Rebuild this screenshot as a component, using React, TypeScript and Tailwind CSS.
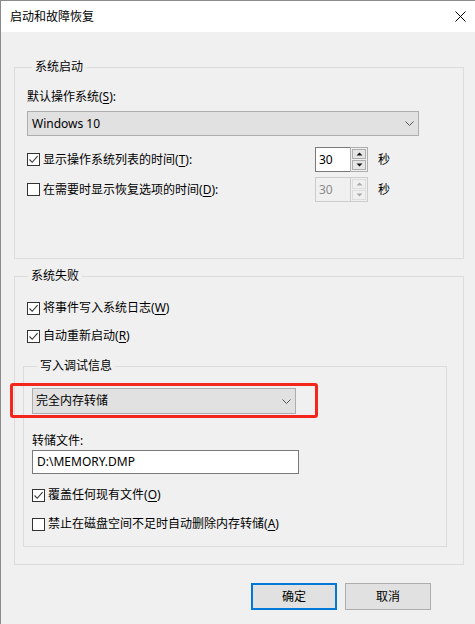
import React from "react";

const font = "font-['Noto_Sans','Noto_Sans_CJK_SC',sans-serif]";

function Check({ checked }: { checked?: boolean }) {
  return (
    <span className="flex h-[13px] w-[13px] shrink-0 items-center justify-center border border-[#333333] bg-white">
      {checked && (
        <svg width="11" height="11" viewBox="0 0 11 11">
          <path d="M1.5 5.5 L4.2 8.3 L9.6 2.2" fill="none" stroke="#333333" strokeWidth="1.1" />
        </svg>
      )}
    </span>
  );
}

function CheckRow({ checked, text, k, colon }: { checked?: boolean; text: string; k: string; colon?: boolean }) {
  return (
    <div className="flex h-4 items-center gap-[3px]">
      <Check checked={checked} />
      <span className="leading-4 whitespace-nowrap">
        {text}(<u className="underline-offset-2">{k}</u>){colon ? ":" : ""}
      </span>
    </div>
  );
}

function Chevron() {
  return (
    <svg width="9" height="5" viewBox="0 0 9 5" className="shrink-0">
      <path d="M0.5 0.5 L4.5 4.5 L8.5 0.5" fill="none" stroke="#555555" strokeWidth="1" />
    </svg>
  );
}

function Arrow({ up, color }: { up?: boolean; color: string }) {
  return (
    <svg width="7" height="4" viewBox="0 0 7 4">
      <path d={up ? "M0.5 3.5 L3.5 0.5 L6.5 3.5 Z" : "M0.5 0.5 L3.5 3.5 L6.5 0.5 Z"} fill={color} />
    </svg>
  );
}

function Spin({ disabled }: { disabled?: boolean }) {
  return (
    <div className="flex h-[25px] w-[53px]">
      <div
        className={
          disabled
            ? "flex flex-1 items-center border border-r-0 border-[#cccccc] bg-[#f0f0f0] pl-[3px] text-[#8a8a8a]"
            : "flex flex-1 items-center border border-r-0 border-[#7a7a7a] bg-white pl-[3px]"
        }
      >
        30
      </div>
      <div
        className={
          disabled
            ? "flex w-[18px] flex-col gap-px border border-[#cccccc] p-px"
            : "flex w-[18px] flex-col gap-px border border-[#adadad] p-px"
        }
      >
        <div
          className={
            disabled
              ? "flex flex-1 items-center justify-center border border-[#dcdcdc] bg-[#f0f0f0]"
              : "flex flex-1 items-center justify-center border border-[#adadad] bg-[#e5e5e5]"
          }
        >
          <Arrow up color={disabled ? "#a8a8a8" : "#111111"} />
        </div>
        <div
          className={
            disabled
              ? "flex flex-1 items-center justify-center border border-[#dcdcdc] bg-[#f0f0f0]"
              : "flex flex-1 items-center justify-center border border-[#adadad] bg-[#e5e5e5]"
          }
        >
          <Arrow color={disabled ? "#a8a8a8" : "#111111"} />
        </div>
      </div>
    </div>
  );
}

export default function App() {
  return (
    <div className={`${font} h-[624px] w-[475px] overflow-hidden border-l border-t border-[#8a8a8a] bg-[#f0f0f0] text-[12px] text-black`}>
      {/* title bar */}
      <div className="flex h-[31px] items-center justify-between bg-white pl-[9px] pr-[9px]">
        <span className="leading-4">启动和故障恢复</span>
        <svg width="11" height="11" viewBox="0 0 11 11">
          <path d="M0.5 0.5 L10.5 10.5 M10.5 0.5 L0.5 10.5" stroke="#000" strokeWidth="1" />
        </svg>
      </div>

      {/* 系统启动 */}
      <fieldset className="ml-[13px] mr-[11px] mt-[27px] border border-[#dcdcdc] pb-[56px] pl-3 pr-[44px]">
        <legend className="ml-[5px] px-[3px] leading-4">系统启动</legend>
        <div className="pt-[14px] leading-4">
          默认操作系统(<u className="underline-offset-2">S</u>):
        </div>
        <div className="mt-[6px] flex h-[25px] items-center justify-between border border-[#adadad] bg-[#e1e1e1] pl-1 pr-[4px]">
          <span>Windows 10</span>
          <Chevron />
        </div>
        <div className="mt-[11px] flex h-[25px] items-center">
          <div className="w-[288px]">
            <CheckRow checked text="显示操作系统列表的时间" k="T" colon />
          </div>
          <Spin />
          <span className="ml-[10px] leading-4">秒</span>
        </div>
        <div className="mt-[5px] flex h-[25px] items-center">
          <div className="w-[288px]">
            <CheckRow text="在需要时显示恢复选项的时间" k="D" colon />
          </div>
          <Spin disabled />
          <span className="ml-[10px] leading-4">秒</span>
        </div>
      </fieldset>

      {/* 系统失败 */}
      <fieldset className="ml-[13px] mr-[11px] mt-[9px] border border-[#dcdcdc] pb-[17px] pl-2">
        <legend className="ml-[5px] px-[3px] leading-4">系统失败</legend>
        <div className="pl-1 pt-4">
          <CheckRow checked text="将事件写入系统日志" k="W" />
        </div>
        <div className="mt-3 pl-1">
          <CheckRow checked text="自动重新启动" k="R" />
        </div>

        <fieldset className="mr-4 mt-[14px] border border-[#dcdcdc] pb-[14px] pl-2">
          <legend className="ml-[5px] px-[3px] leading-4">写入调试信息</legend>
          <div className="relative mr-[150px] mt-[14px]">
            <div className="flex h-[26px] items-center justify-between border border-[#adadad] bg-[#e1e1e1] pl-[3px] pr-[4px]">
              <span>完全内存转储</span>
              <Chevron />
            </div>
            <div className="absolute -bottom-[4px] -left-[22px] -right-[22px] -top-[5px] rounded-[3px] border-[3px] border-[#f4261c]" />
          </div>
          <div className="mt-[19px] leading-4">转储文件:</div>
          <div className="mt-px flex h-[24px] w-[267px] items-center border border-[#7a7a7a] bg-white pl-[4px]">
            D:\MEMORY.DMP
          </div>
          <div className="mt-[13px]">
            <CheckRow checked text="覆盖任何现有文件" k="O" />
          </div>
          <div className="mt-[13px]">
            <CheckRow text="禁止在磁盘空间不足时自动删除内存转储" k="A" />
          </div>
        </fieldset>
      </fieldset>

      {/* buttons */}
      <div className="mr-[44px] mt-[18px] flex justify-end gap-2">
        <button className="h-[27px] w-[86px] border-2 border-[#0078d7] bg-[#e1e1e1] leading-4">确定</button>
        <button className="h-[27px] w-[86px] border border-[#adadad] bg-[#e1e1e1] leading-4">取消</button>
      </div>
    </div>
  );
}
